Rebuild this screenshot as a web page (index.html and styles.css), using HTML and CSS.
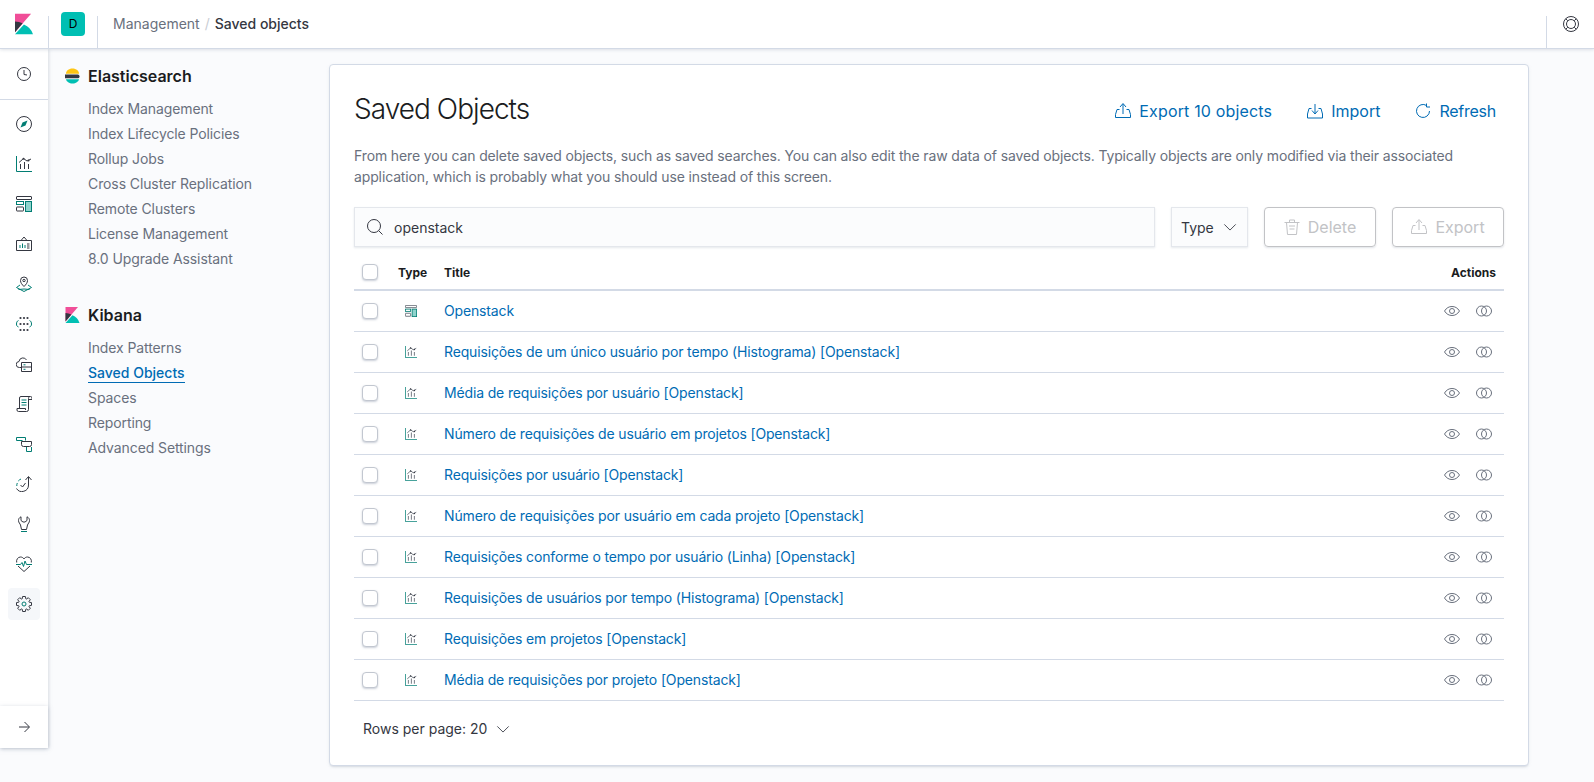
FILE: index.html
```html
<!DOCTYPE html>
<html lang="en">
<head>
    <meta charset="UTF-8">
    <title>Saved Objects - Kibana</title>
    <link rel="stylesheet" href="styles.css">
</head>
<body>
    <svg class="sprites" width="0" height="0">
        <symbol id="i-clock" viewBox="0 0 16 16"><circle cx="8" cy="8" r="6.5"/><path d="M8 4v4.5l3 .5"/></symbol>
        <symbol id="i-discover" viewBox="0 0 16 16"><circle cx="8" cy="8" r="7.5"/><path class="t-fill" d="M11.5 4.5 9.5 9.5 4.5 11.5 6.5 6.5z"/></symbol>
        <symbol id="i-visualize" viewBox="0 0 16 16"><path class="t" d="M.5 0v15.5H16"/><path d="M4.5 8v5M8.5 6v7M12.5 8v5M3 6.5 7.5 2.5l3.5 2.5L15 3"/><circle class="d-fill" cx="7.5" cy="2.8" r="1"/><circle class="d-fill" cx="12.5" cy="4.6" r="1"/></symbol>
        <symbol id="i-dashboard" viewBox="0 0 16 16"><rect x=".5" y=".5" width="15" height="3" rx=".5"/><rect x=".5" y="5.5" width="7" height="3" class="t"/><rect x=".5" y="11" width="7" height="4" rx=".5"/><rect class="t-soft" x="9.5" y="5.5" width="6" height="10"/></symbol>
        <symbol id="i-canvas" viewBox="0 0 16 16"><path d="M.5 4.5h15v10H.5zM5 4.5 8 1l3 3.5"/><path class="t" d="M4 12V9M6.5 12V7.5M9 12V9"/><path d="M11 8h2.5M11 10h2.5M11 12h2.5"/></symbol>
        <symbol id="i-maps" viewBox="0 0 16 16"><path d="M8 10.5C6 8.5 4.5 6.8 4.5 4.5a3.5 3.5 0 0 1 7 0c0 2.3-1.5 4-3.5 6z"/><circle cx="8" cy="4.5" r="1.2"/><path class="t" d="M4 9 .5 11.5 8 15.5l7.5-4L12 9M2.5 13.5 8 13l5.5.5"/></symbol>
        <symbol id="i-ml" viewBox="0 0 16 16"><circle class="d-fill" cx="4.5" cy="2" r="1.1"/><circle class="d-fill" cx="8" cy="2" r="1.1"/><circle class="d-fill" cx="11.5" cy="2" r="1.1"/><circle class="d-fill" cx="4.5" cy="8" r="1.1"/><circle class="d-fill" cx="8" cy="8" r="1.1"/><circle class="d-fill" cx="11.5" cy="8" r="1.1"/><circle class="d-fill" cx="4.5" cy="14" r="1.1"/><circle class="d-fill" cx="8" cy="14" r="1.1"/><circle class="d-fill" cx="11.5" cy="14" r="1.1"/><path class="t" d="M2.5 4.5C1 5 .5 6.500 .5 8s.5 2.500 2 3M13.5 4.500c1.500.5 2 2 2 3.500s-.5 2.500-2 3"/></symbol>
        <symbol id="i-infra" viewBox="0 0 16 16"><path d="M5 11.5H3.5a3 3 0 0 1-.5-6 4 4 0 0 1 7.500-1.500"/><path d="M5.500 6.500h10v9h-10zM5.500 11h10"/><path class="t" d="M7.500 8.800h2M7.500 13.300h2"/></symbol>
        <symbol id="i-logs" viewBox="0 0 16 16"><path d="M3.500 12.500V2A1.500 1.500 0 0 1 5 .5h9.500A1.500 1.500 0 0 1 16 2v1.500h-3.500M14 .5c-1 0-1.500 1-1.500 2v11a2 2 0 0 1-2 2h-8A1.500 1.500 0 0 1 1 14v-1.500h8.500V14"/><path class="t" d="M5.500 4h5M5.500 6.500h5M5.500 9h5"/></symbol>
        <symbol id="i-apm" viewBox="0 0 16 16"><path class="t" d="M6.500 4.500h-6v-3h9v3M10.500 11v4.500h5V11"/><path d="M5.500 5.500h10v3a2 2 0 0 1-2 2h-6a2 2 0 0 1-2-2z"/></symbol>
        <symbol id="i-uptime" viewBox="0 0 16 16"><path d="M12.500 1v8a6.500 6.500 0 0 1-12 3.500M9.500 4l3-3.500 3 3.500"/><path class="t" d="M.8 10a6.500 6.500 0 0 1 .5-3M2.300 5A6.500 6.500 0 0 1 5 3"/><path d="M4.500 9l2 2 3-4"/></symbol>
        <symbol id="i-devtools" viewBox="0 0 16 16"><path d="M5 .8C3.200 1.600 2.500 3 2.500 4.500c0 2.200 1.500 3 2 4.500l1 4.500h5l1-4.500c.5-1.500 2-2.300 2-4.500 0-1.500-.7-2.900-2.500-3.700v3.700l-2 1.500H7L5 4.500z"/><path class="t" d="M5 15.500h6"/></symbol>
        <symbol id="i-monitoring" viewBox="0 0 16 16"><path d="M.7 6.500C0 3.500 2 1 4.500 1 6 1 7.200 1.700 8 3c.8-1.300 2-2 3.500-2C14 1 16 3.500 15.300 6.500M2 10l6 5.500 6-5.500"/><path class="t" d="M0 8.500h4.500L6 6.500l1.500 4 1.500-5.500 1.500 3.500H16"/></symbol>
        <symbol id="i-gear" viewBox="0 0 16 16"><polygon points="6.2,2.8 6.6,.5 9.4,.5 9.8,2.8 10.4,3.05 12.31,1.71 14.29,3.69 12.95,5.6 13.2,6.2 15.5,6.6 15.5,9.4 13.2,9.8 12.95,10.4 14.29,12.31 12.31,14.29 10.4,12.95 9.8,13.2 9.4,15.5 6.6,15.5 6.2,13.2 5.6,12.95 3.69,14.29 1.71,12.31 3.05,10.4 2.8,9.8 .5,9.4 .5,6.6 2.8,6.2 3.05,5.6 1.71,3.69 3.69,1.71 5.6,3.05"/><circle class="t" cx="8" cy="8" r="2"/></symbol>
        <symbol id="i-arrow" viewBox="0 0 16 16"><path d="M3 8h10M8.500 3l5 5-5 5"/></symbol>
        <symbol id="i-help" viewBox="0 0 16 16"><circle cx="8" cy="8" r="7.500"/><circle cx="8" cy="8" r="4.500"/><path d="M2.700 2.700l2.100 2.100M13.300 2.700l-2.100 2.100M2.700 13.300l2.100-2.100M13.300 13.300l-2.100-2.100"/></symbol>
        <symbol id="i-export" viewBox="0 0 16 16"><path d="M4.500 6.500H2l-1.500 5v3h15v-3l-1.500-5h-2.500M8 11V1M5 4l3-3.500L11 4"/></symbol>
        <symbol id="i-import" viewBox="0 0 16 16"><path d="M4.500 5.500H2l-1.500 5.500v4h15v-4L14 5.500h-2.500M8 1v9.500M5 7.500l3 3.500 3-3.500"/></symbol>
        <symbol id="i-refresh" viewBox="0 0 16 16"><path d="M11.500 2.500a6.500 6.500 0 1 0 3 5.500M11.500 .5V4H15"/></symbol>
        <symbol id="i-search" viewBox="0 0 16 16"><circle cx="7" cy="7" r="6.500"/><path d="M11.700 11.700l3.800 3.800"/></symbol>
        <symbol id="i-down" viewBox="0 0 16 16"><path d="M1.500 5L8 11.500 14.500 5"/></symbol>
        <symbol id="i-trash" viewBox="0 0 16 16"><path d="M.5 3.500h15M5.500 3.500V1h5v2.500M2.500 3.500l1 12h9l1-12M5 7h6M5.500 10h5"/></symbol>
        <symbol id="i-eye" viewBox="0 0 16 16"><path d="M.5 8C2.500 4.800 5 3.500 8 3.500s5.500 1.300 7.500 4.500c-2 3.200-4.500 4.500-7.500 4.500S2.500 11.200.5 8z"/><circle cx="8" cy="8" r="2.500"/></symbol>
        <symbol id="i-rings" viewBox="0 0 16 16"><circle cx="5.500" cy="8" r="5"/><circle cx="10.500" cy="8" r="5"/></symbol>
    </svg>

    <header class="topbar">
        <div class="logo-box">
            <svg class="logo" viewBox="4 0 28 32"><path fill="#f04e98" d="M4 0v28.800L29 0z"/><path fill="#343741" d="M4 12v16.800L15.900 15A24.700 24.700 0 0 0 4 12"/><path fill="#00bfb3" d="M17.900 16.700 4 32h28a24 24 0 0 0-14.100-15.300"/></svg>
        </div>
        <div class="space-box"><span class="space-badge">D</span></div>
        <nav class="crumbs">
            <span>Management</span>
            <span class="crumb-sep">/</span>
            <span class="crumb-last">Saved objects</span>
        </nav>
        <div class="help-box"><svg class="icon"><use href="#i-help"/></svg></div>
    </header>

    <div class="app">
        <nav class="rail">
            <div class="rail-recent"><svg class="icon"><use href="#i-clock"/></svg></div>
            <div class="rail-item"><svg class="icon"><use href="#i-discover"/></svg></div>
            <div class="rail-item"><svg class="icon"><use href="#i-visualize"/></svg></div>
            <div class="rail-item"><svg class="icon"><use href="#i-dashboard"/></svg></div>
            <div class="rail-item"><svg class="icon"><use href="#i-canvas"/></svg></div>
            <div class="rail-item"><svg class="icon"><use href="#i-maps"/></svg></div>
            <div class="rail-item"><svg class="icon"><use href="#i-ml"/></svg></div>
            <div class="rail-item"><svg class="icon"><use href="#i-infra"/></svg></div>
            <div class="rail-item"><svg class="icon"><use href="#i-logs"/></svg></div>
            <div class="rail-item"><svg class="icon"><use href="#i-apm"/></svg></div>
            <div class="rail-item"><svg class="icon"><use href="#i-uptime"/></svg></div>
            <div class="rail-item"><svg class="icon"><use href="#i-devtools"/></svg></div>
            <div class="rail-item"><svg class="icon"><use href="#i-monitoring"/></svg></div>
            <div class="rail-item rail-active"><span><svg class="icon"><use href="#i-gear"/></svg></span></div>
            <div class="rail-collapse"><svg class="icon"><use href="#i-arrow"/></svg></div>
        </nav>

        <aside class="sidenav">
            <div class="side-title">
                <svg class="side-logo" viewBox="0 0 16 16"><path fill="#fec514" d="M1 5.500C1 2.500 4 0 8 0s7 2.500 7 5.500z"/><path fill="#343741" d="M0 6.500h13.500a2 2 0 0 1 0 4H0c-.3-1.300-.3-2.700 0-4"/><path fill="#00bfb3" d="M1 11.500h14C14.500 14 11.500 16 8 16s-6.500-2-7-4.500"/></svg>
                <span>Elasticsearch</span>
            </div>
            <ul class="side-list">
                <li>Index Management</li>
                <li>Index Lifecycle Policies</li>
                <li>Rollup Jobs</li>
                <li>Cross Cluster Replication</li>
                <li>Remote Clusters</li>
                <li>License Management</li>
                <li>8.0 Upgrade Assistant</li>
            </ul>
            <div class="side-title">
                <svg class="side-logo" viewBox="4 0 28 32"><path fill="#f04e98" d="M4 0v28.800L29 0z"/><path fill="#343741" d="M4 12v16.800L15.900 15A24.700 24.700 0 0 0 4 12"/><path fill="#00bfb3" d="M17.900 16.700 4 32h28a24 24 0 0 0-14.100-15.300"/></svg>
                <span>Kibana</span>
            </div>
            <ul class="side-list">
                <li>Index Patterns</li>
                <li class="side-current">Saved Objects</li>
                <li>Spaces</li>
                <li>Reporting</li>
                <li>Advanced Settings</li>
            </ul>
        </aside>

        <main class="content">
            <section class="panel">
                <div class="panel-head">
                    <h1>Saved Objects</h1>
                    <div class="head-actions">
                        <a class="head-link head-link-wide"><svg class="icon"><use href="#i-export"/></svg>Export 10 objects</a>
                        <a class="head-link"><svg class="icon"><use href="#i-import"/></svg>Import</a>
                        <a class="head-link head-link-tight"><svg class="icon"><use href="#i-refresh"/></svg>Refresh</a>
                    </div>
                </div>
                <p class="intro">From here you can delete saved objects, such as saved searches. You can also edit the raw data of saved objects. Typically objects are only modified via their associated application, which is probably what you should use instead of this screen.</p>

                <div class="toolbar">
                    <div class="search-box"><svg class="icon"><use href="#i-search"/></svg><span>openstack</span></div>
                    <div class="filter-btn">Type<svg class="icon chevron"><use href="#i-down"/></svg></div>
                    <div class="action-btn"><svg class="icon"><use href="#i-trash"/></svg>Delete</div>
                    <div class="action-btn"><svg class="icon"><use href="#i-export"/></svg>Export</div>
                </div>

                <div class="table">
                    <div class="row row-head">
                        <span class="check"></span>
                        <span class="col-type">Type</span>
                        <span class="col-title">Title</span>
                        <span class="col-actions">Actions</span>
                    </div>
                    <div class="row">
                        <span class="check"></span>
                        <span class="col-type"><svg class="type-icon"><use href="#i-dashboard"/></svg></span>
                        <a class="col-title">Openstack</a>
                        <span class="col-actions"><svg class="act-icon"><use href="#i-eye"/></svg><svg class="act-icon"><use href="#i-rings"/></svg></span>
                    </div>
                    <div class="row">
                        <span class="check"></span>
                        <span class="col-type"><svg class="type-icon"><use href="#i-visualize"/></svg></span>
                        <a class="col-title">Requisições de um único usuário por tempo (Histograma) [Openstack]</a>
                        <span class="col-actions"><svg class="act-icon"><use href="#i-eye"/></svg><svg class="act-icon"><use href="#i-rings"/></svg></span>
                    </div>
                    <div class="row">
                        <span class="check"></span>
                        <span class="col-type"><svg class="type-icon"><use href="#i-visualize"/></svg></span>
                        <a class="col-title">Média de requisições por usuário [Openstack]</a>
                        <span class="col-actions"><svg class="act-icon"><use href="#i-eye"/></svg><svg class="act-icon"><use href="#i-rings"/></svg></span>
                    </div>
                    <div class="row">
                        <span class="check"></span>
                        <span class="col-type"><svg class="type-icon"><use href="#i-visualize"/></svg></span>
                        <a class="col-title">Número de requisições de usuário em projetos [Openstack]</a>
                        <span class="col-actions"><svg class="act-icon"><use href="#i-eye"/></svg><svg class="act-icon"><use href="#i-rings"/></svg></span>
                    </div>
                    <div class="row">
                        <span class="check"></span>
                        <span class="col-type"><svg class="type-icon"><use href="#i-visualize"/></svg></span>
                        <a class="col-title">Requisições por usuário [Openstack]</a>
                        <span class="col-actions"><svg class="act-icon"><use href="#i-eye"/></svg><svg class="act-icon"><use href="#i-rings"/></svg></span>
                    </div>
                    <div class="row">
                        <span class="check"></span>
                        <span class="col-type"><svg class="type-icon"><use href="#i-visualize"/></svg></span>
                        <a class="col-title">Número de requisições por usuário em cada projeto [Openstack]</a>
                        <span class="col-actions"><svg class="act-icon"><use href="#i-eye"/></svg><svg class="act-icon"><use href="#i-rings"/></svg></span>
                    </div>
                    <div class="row">
                        <span class="check"></span>
                        <span class="col-type"><svg class="type-icon"><use href="#i-visualize"/></svg></span>
                        <a class="col-title">Requisições conforme o tempo por usuário (Linha) [Openstack]</a>
                        <span class="col-actions"><svg class="act-icon"><use href="#i-eye"/></svg><svg class="act-icon"><use href="#i-rings"/></svg></span>
                    </div>
                    <div class="row">
                        <span class="check"></span>
                        <span class="col-type"><svg class="type-icon"><use href="#i-visualize"/></svg></span>
                        <a class="col-title">Requisições de usuários por tempo (Histograma) [Openstack]</a>
                        <span class="col-actions"><svg class="act-icon"><use href="#i-eye"/></svg><svg class="act-icon"><use href="#i-rings"/></svg></span>
                    </div>
                    <div class="row">
                        <span class="check"></span>
                        <span class="col-type"><svg class="type-icon"><use href="#i-visualize"/></svg></span>
                        <a class="col-title">Requisições em projetos [Openstack]</a>
                        <span class="col-actions"><svg class="act-icon"><use href="#i-eye"/></svg><svg class="act-icon"><use href="#i-rings"/></svg></span>
                    </div>
                    <div class="row">
                        <span class="check"></span>
                        <span class="col-type"><svg class="type-icon"><use href="#i-visualize"/></svg></span>
                        <a class="col-title">Média de requisições por projeto [Openstack]</a>
                        <span class="col-actions"><svg class="act-icon"><use href="#i-eye"/></svg><svg class="act-icon"><use href="#i-rings"/></svg></span>
                    </div>
                </div>

                <div class="pager">Rows per page: 20<svg class="icon chevron"><use href="#i-down"/></svg></div>
            </section>
        </main>
    </div>
</body>
</html>
```

FILE: styles.css
```css
/* page */
html, body {
    margin: 0;
    height: 100%;
}

body {
    font-family: Inter, 'Liberation Sans', sans-serif;
    font-size: 14px;
    background-color: #fafbfd;
    color: #343741;
    display: flex;
    flex-direction: column;
    overflow: hidden;
}

.sprites {
    display: none;
}

/* icons take their colours from here */
.icon, .type-icon, .act-icon {
    display: block;
    flex: none;
    width: 16px;
    height: 16px;
    fill: none;
    stroke: #343741;
    stroke-width: 1;
}

symbol .t { stroke: #017d73; }
symbol .t-soft { stroke: #017d73; fill: #8fd3cc; }
symbol .t-fill { stroke: none; fill: #017d73; }
symbol .d-fill { stroke: none; fill: #343741; }

/* top bar */
.topbar {
    flex: none;
    display: flex;
    height: 48px;
    background-color: #fff;
    border-bottom: 1px solid #d3dae6;
    box-shadow: 0 1px 3px rgba(152, 162, 179, 0.3);
    position: relative;
    z-index: 2;
}

.logo-box {
    width: 48px;
    display: flex;
    align-items: center;
    justify-content: center;
}

.logo {
    width: 18px;
    height: 24px;
    margin-left: -1px;
}

.space-box {
    width: 48px;
    margin-top: 16px;
    border-left: 1px solid #d3dae6;
    border-right: 1px solid #d3dae6;
}

.space-badge {
    display: block;
    width: 24px;
    height: 24px;
    margin: -4px 0 0 12px;
    border-radius: 4px;
    background-color: #00bfb3;
    color: #000;
    font-size: 12px;
    line-height: 24px;
    text-align: center;
}

.crumbs {
    flex: 1;
    display: flex;
    align-items: center;
    gap: 5px;
    padding-left: 15px;
    padding-bottom: 1px;
    color: #69707d;
}

.crumb-sep {
    color: #c9cdd4;
}

.crumb-last {
    color: #343741;
    font-weight: 500;
}

.help-box {
    width: 48px;
    margin-top: 16px;
    border-left: 1px solid #d3dae6;
    box-sizing: border-box;
}

.help-box .icon {
    margin: 0 0 0 16px;
}

/* main columns */
.app {
    flex: 1;
    display: flex;
    min-height: 0;
}

.rail {
    flex: none;
    width: 48px;
    margin-bottom: 34px;
    background-color: #fff;
    box-shadow: 1px 0 3px rgba(152, 162, 179, 0.35);
    display: flex;
    flex-direction: column;
    align-items: stretch;
    position: relative;
    z-index: 1;
}

.rail-recent {
    height: 50px;
    display: flex;
    align-items: center;
    justify-content: center;
    border-bottom: 1px solid #d3dae6;
    margin-bottom: 4px;
}

.rail-item {
    height: 40px;
    display: flex;
    align-items: center;
    justify-content: center;
}

.rail-active span {
    width: 32px;
    height: 32px;
    border-radius: 4px;
    background-color: #f5f7fa;
    display: flex;
    align-items: center;
    justify-content: center;
}

.rail-collapse {
    margin-top: auto;
    height: 42px;
    display: flex;
    align-items: center;
    justify-content: center;
    box-shadow: 0 1px 4px rgba(152, 162, 179, 0.5);
}

/* second nav */
.sidenav {
    flex: none;
    width: 281px;
    box-sizing: border-box;
    padding: 17px 0 0 17px;
}

.side-title {
    display: flex;
    align-items: center;
    gap: 8px;
    height: 20px;
    font-size: 16px;
    font-weight: 600;
    color: #1a1c21;
}

.side-logo {
    flex: none;
    width: 15px;
    height: 16px;
}

.side-list {
    list-style-type: none;
    margin: 10px 0 34px;
    padding: 0 0 0 23px;
    color: #69707d;
    line-height: 25px;
    letter-spacing: -0.1px;
}

.side-current {
    width: fit-content;
    color: #006bb4;
    font-weight: 500;
    line-height: 21px;
    margin: 2px 0;
    border-bottom: 1px solid #006bb4;
    height: 20px;
    letter-spacing: 0;
}

/* panel */
.content {
    flex: 1;
    min-width: 0;
    padding: 15px 65px 16px 0;
}

.panel {
    height: 702px;
    box-sizing: border-box;
    padding: 24px 24px 0;
    background-color: #fff;
    border: 1px solid #d3dae6;
    border-radius: 4px;
    box-shadow: 0 2px 2px -1px rgba(152, 162, 179, 0.3), 0 1px 5px -2px rgba(152, 162, 179, 0.3);
}

.panel-head {
    display: flex;
    justify-content: space-between;
    align-items: center;
    height: 40px;
}

.panel-head h1 {
    margin: 0;
    font-size: 28px;
    font-weight: 300;
    letter-spacing: -0.96px;
    color: #1a1c21;
}

.head-actions {
    display: flex;
    gap: 35px;
    padding: 4px 8px 0 0;
}

.head-link {
    display: flex;
    align-items: center;
    gap: 8px;
    font-size: 16px;
    color: #006bb4;
}

.head-link-wide {
    letter-spacing: 0.17px;
}

.head-link-tight {
    letter-spacing: -0.25px;
}

.head-link .icon {
    stroke: #006bb4;
}

.intro {
    margin: 17px 0 20px;
    color: #69707d;
    line-height: 20.5px;
    letter-spacing: -0.13px;
}

.toolbar {
    display: flex;
    gap: 16px;
    height: 40px;
}

.search-box {
    flex: 1;
    display: flex;
    align-items: center;
    gap: 11px;
    padding-left: 12px;
    background-color: #fbfcfd;
    border: 1px solid #e4e7ec;
    box-shadow: 0 1px 2px rgba(152, 162, 179, 0.25);
}

.filter-btn {
    width: 77px;
    box-sizing: border-box;
    display: flex;
    align-items: center;
    justify-content: space-between;
    padding: 0 10px 0 9px;
    background-color: #fbfcfd;
    border: 1px solid #e4e7ec;
    box-shadow: 0 1px 2px rgba(152, 162, 179, 0.25);
}

.chevron {
    width: 14px;
    height: 14px;
}

.action-btn {
    width: 112px;
    box-sizing: border-box;
    display: flex;
    align-items: center;
    justify-content: center;
    gap: 8px;
    font-size: 16px;
    color: #c2c3c6;
    border: 1px solid #c2c3c6;
    border-radius: 4px;
    box-shadow: 0 1px 2px rgba(152, 162, 179, 0.3);
}

.action-btn .icon {
    stroke: #c2c3c6;
}

/* table */
.table {
    margin-top: 6px;
}

.row {
    display: flex;
    align-items: center;
    height: 40px;
    border-bottom: 1px solid #d3dae6;
}

.row-head {
    height: 34px;
    padding-top: 2px;
    border-bottom: 2px solid #d3dae6;
    font-size: 12px;
    font-weight: 700;
    color: #1a1c21;
}

.check {
    flex: none;
    width: 16px;
    height: 16px;
    margin-left: 8px;
    box-sizing: border-box;
    background-color: #fff;
    border: 1px solid #c2c7d0;
    border-radius: 4px;
    box-shadow: 0 1px 2px rgba(152, 162, 179, 0.5);
}

.col-type {
    flex: none;
    width: 46px;
    margin-left: 20px;
    box-sizing: border-box;
}

.type-icon {
    width: 12px;
    height: 12px;
    margin-left: 7px;
    stroke: #5a606b;
    stroke-width: 1.1;
}

.col-title {
    flex: 1;
    padding-bottom: 1px;
    color: #006bb4;
    letter-spacing: -0.15px;
}

.row-head .col-title {
    padding-bottom: 0;
    color: #1a1c21;
    letter-spacing: 0;
}

.col-actions {
    display: flex;
    gap: 16px;
    padding-right: 12px;
}

.row-head .col-actions {
    padding-right: 8px;
}

.act-icon {
    stroke: #69707d;
}

.pager {
    display: flex;
    align-items: center;
    gap: 9px;
    margin-top: 18px;
    padding-left: 9px;
    line-height: 20px;
}
```
